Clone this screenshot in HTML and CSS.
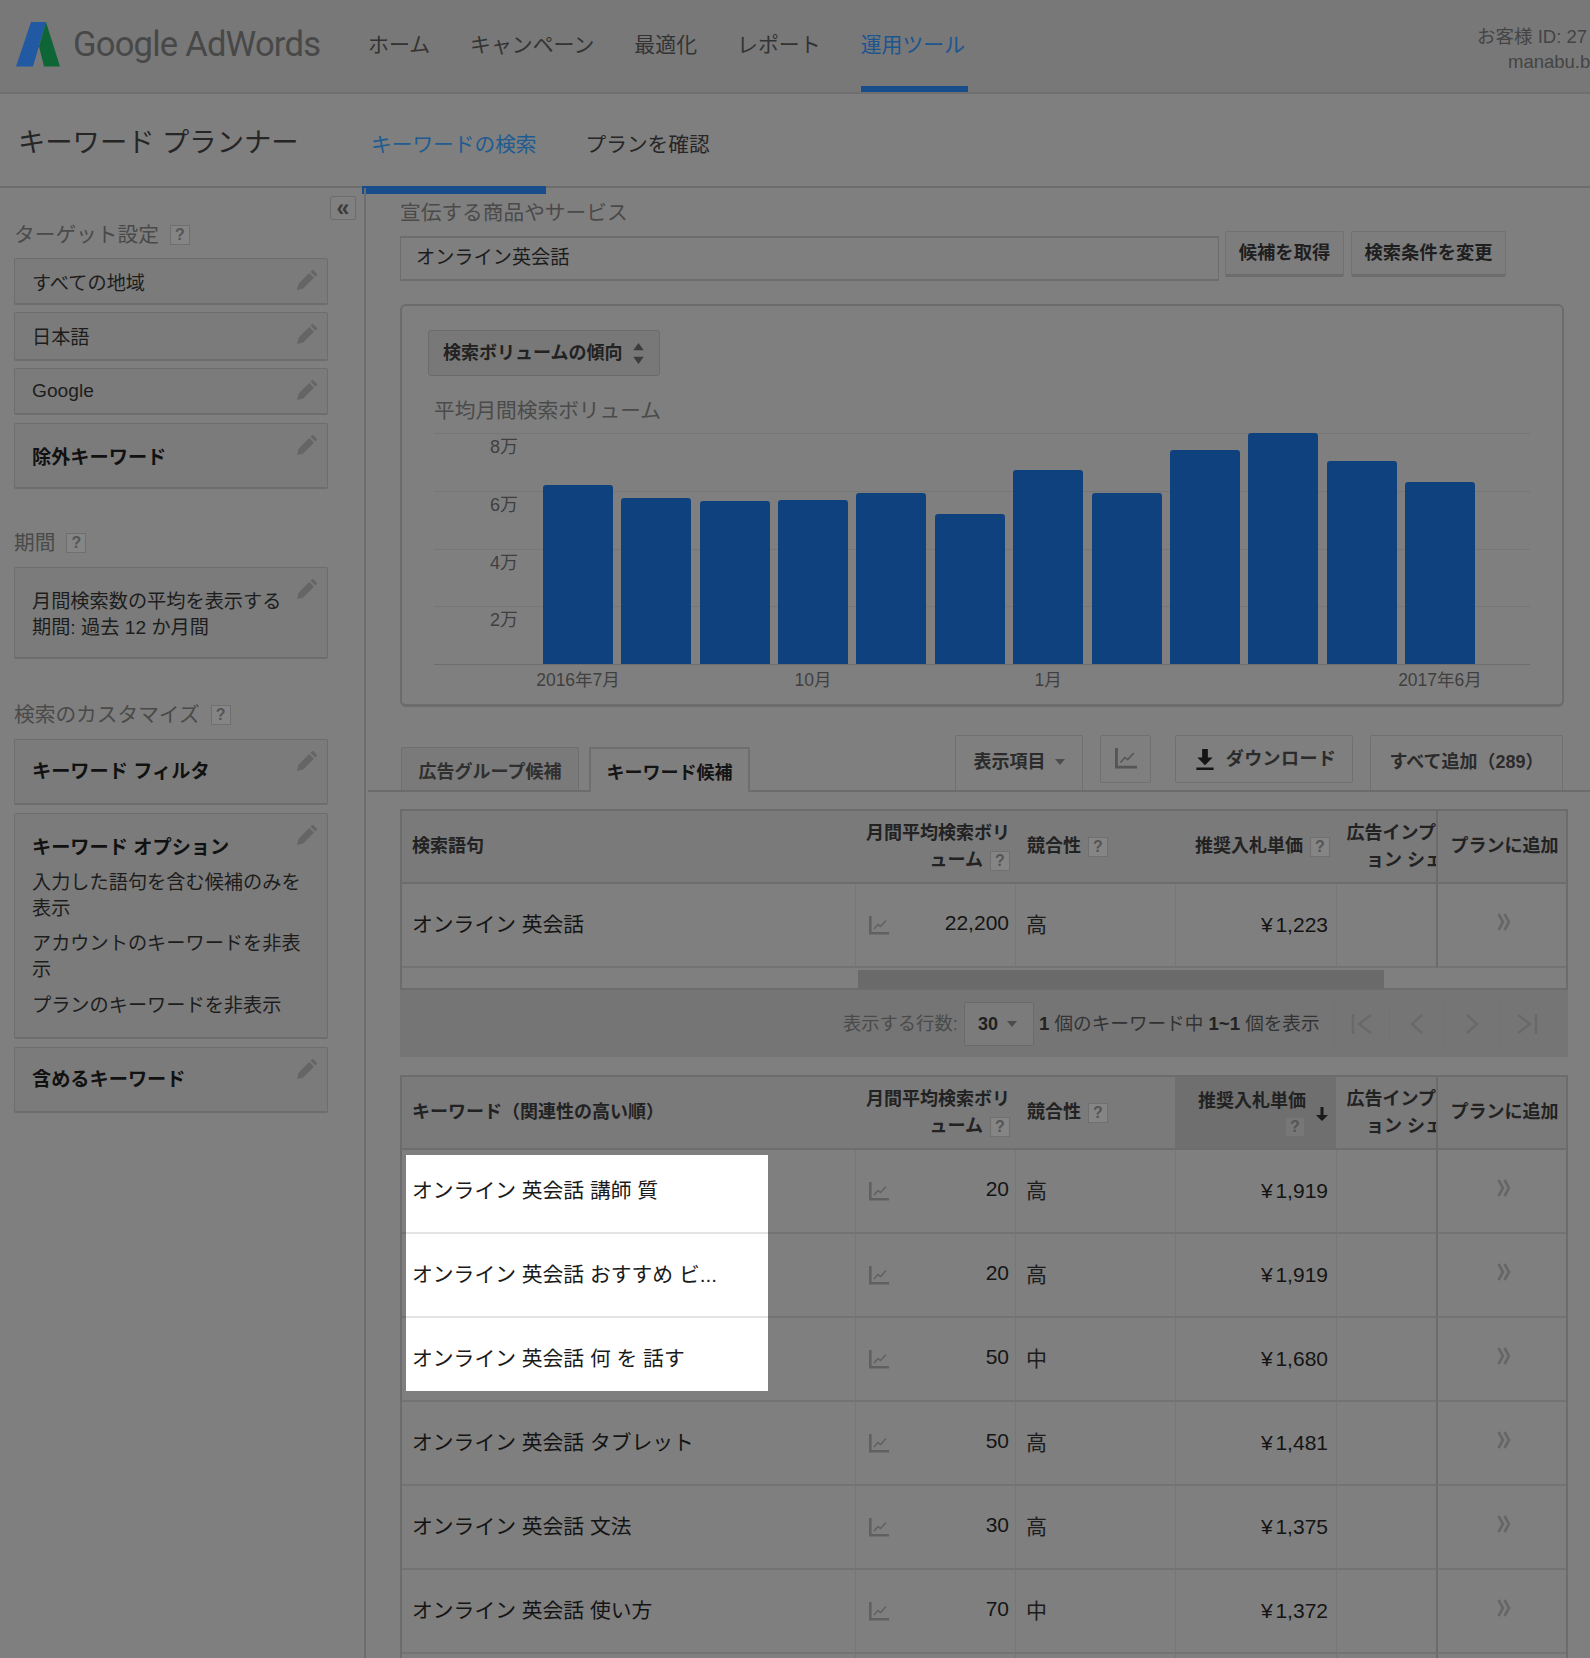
FILE: index.html
```html
<!DOCTYPE html>
<html lang="ja">
<head>
<meta charset="utf-8">
<title>Google AdWords キーワード プランナー</title>
<link rel="stylesheet" href="styles.css">
</head>
<body>
<svg class="defs" width="0" height="0" aria-hidden="true">
  <symbol id="pencil" viewBox="0 0 18 18"><path d="M0 18l1.400-5.600L11 2.800l4.200 4.200-9.600 9.600z"/><path d="M12.200 1.600L13.600.2c.3-.3.8-.3 1.100 0l3.100 3.100c.3.3.3.8 0 1.100l-1.400 1.400z"/></symbol>
  <symbol id="trend" viewBox="0 0 20 20"><path d="M1.300 1v17.300H20" fill="none" stroke="currentColor" stroke-width="2.600"/><path d="M5 14l4-4.500 2.500 2L17 5.500" fill="none" stroke="currentColor" stroke-width="1.400"/></symbol>
  <symbol id="more" viewBox="0 0 14 18"><path d="M1.500 1l4.500 8-4.500 8M7.500 1l4.500 8-4.500 8" fill="none" stroke="currentColor" stroke-width="2.600"/></symbol>
</svg>

<header class="topbar">
  <svg class="logo" viewBox="0 0 44 45" aria-hidden="true"><path d="M0 44.500L15 0h15L17 44.500z" fill="#2159a3"/><path d="M30 0l14 44.500H28l-5-20z" fill="#0e6535"/></svg>
  <div class="brand">Google AdWords</div>
  <nav class="mainnav">
    <a class="mainnav-item">ホーム</a>
    <a class="mainnav-item">キャンペーン</a>
    <a class="mainnav-item">最適化</a>
    <a class="mainnav-item">レポート</a>
    <a class="mainnav-item is-active">運用ツール</a>
  </nav>
  <div class="account">
    <div>お客様 ID: 27</div>
    <div class="account-mail">manabu.b</div>
  </div>
</header>

<div class="subbar">
  <h1 class="page-title">キーワード プランナー</h1>
  <a class="subtab is-active">キーワードの検索</a>
  <a class="subtab">プランを確認</a>
</div>

<div class="layout">
  <aside class="sidebar">
    <button class="collapse">«</button>

    <h2 class="side-title">ターゲット設定<span class="help help-side">?</span></h2>
    <div class="card-stack">
      <div class="card card-s card-low"><span>すべての地域</span><svg class="pencil"><use href="#pencil"/></svg></div>
      <div class="card card-m"><span>日本語</span><svg class="pencil"><use href="#pencil"/></svg></div>
      <div class="card card-s"><span>Google</span><svg class="pencil"><use href="#pencil"/></svg></div>
      <div class="card card-l card-first-gap card-low"><b>除外キーワード</b><svg class="pencil"><use href="#pencil"/></svg></div>
    </div>

    <h2 class="side-title side-title-next">期間<span class="help help-side">?</span></h2>
    <div class="card card-period">
      <p>月間検索数の平均を表示する<br>期間: 過去 12 か月間</p>
      <svg class="pencil"><use href="#pencil"/></svg>
    </div>

    <h2 class="side-title side-title-last">検索のカスタマイズ<span class="help help-side">?</span></h2>
    <div class="card-stack card-stack-wide">
      <div class="card card-l"><b>キーワード フィルタ</b><svg class="pencil"><use href="#pencil"/></svg></div>
      <div class="card card-options">
        <b>キーワード オプション</b>
        <p>入力した語句を含む候補のみを表示</p>
        <p>アカウントのキーワードを非表示</p>
        <p class="option-last">プランのキーワードを非表示</p>
        <svg class="pencil"><use href="#pencil"/></svg>
      </div>
      <div class="card card-l"><b>含めるキーワード</b><svg class="pencil"><use href="#pencil"/></svg></div>
    </div>
  </aside>

  <main class="content">
    <div class="field-label">宣伝する商品やサービス</div>
    <div class="search-row">
      <div class="search-input">オンライン英会話</div>
      <button class="btn btn-get">候補を取得</button>
      <button class="btn btn-change">検索条件を変更</button>
    </div>

    <section class="chart-panel">
      <div class="chart-select">検索ボリュームの傾向
        <svg class="updown" viewBox="0 0 10 20" aria-hidden="true"><path d="M5 0l5 7H0zM5 20l-5-7h10z"/></svg>
      </div>
      <div class="chart-title">平均月間検索ボリューム</div>
      <div class="plot">
        <div class="plot-row"><span>8万</span></div>
        <div class="plot-row"><span>6万</span></div>
        <div class="plot-row"><span>4万</span></div>
        <div class="plot-row"><span>2万</span></div>
        <div class="bars">
          <i class="bar" style="height:179px"></i><i class="bar" style="height:166px"></i><i class="bar" style="height:163px"></i><i class="bar" style="height:164px"></i><i class="bar" style="height:171px"></i><i class="bar" style="height:150px"></i><i class="bar" style="height:194px"></i><i class="bar" style="height:171px"></i><i class="bar" style="height:214px"></i><i class="bar" style="height:231px"></i><i class="bar" style="height:203px"></i><i class="bar" style="height:182px"></i>
        </div>
      </div>
      <div class="x-axis">
        <span>2016年7月</span><span></span><span></span><span>10月</span><span></span><span></span><span>1月</span><span></span><span></span><span></span><span></span><span>2017年6月</span>
      </div>
    </section>

    <div class="result-tabs">
      <a class="rtab">広告グループ候補</a>
      <a class="rtab is-active">キーワード候補</a>
      <div class="tools">
        <button class="tool tool-columns">表示項目<i class="caret"></i></button>
        <button class="tool tool-short tool-chart"><svg class="trend-lg"><use href="#trend"/></svg></button>
        <button class="tool tool-short tool-download">
          <svg class="dl" viewBox="0 0 18 22" aria-hidden="true"><path d="M6 0h6v9h5l-8 8-8-8h5zM0 19.500h18V22H0z"/></svg>ダウンロード
        </button>
        <button class="tool tool-add">すべて追加（289）</button>
      </div>
    </div>

    <div class="grid-wrap">
      <table class="grid">
        <colgroup><col class="c1"><col class="c2"><col class="c3"><col class="c4"><col class="c5"><col class="c6"></colgroup>
        <thead><tr>
          <th class="t-left">検索語句</th>
          <th class="t-right">月間平均検索ボリ<br>ューム<span class="help">?</span></th>
          <th class="t-left th-comp">競合性<span class="help">?</span></th>
          <th class="t-right th-bid">推奨入札単価<span class="help">?</span></th>
          <th class="t-right th-share">広告インプ<br><span class="share-2">ョン シェ</span></th>
          <th class="t-plan">プランに追加</th>
        </tr></thead>
        <tbody>
          <tr>
            <td class="kw">オンライン 英会話</td>
            <td><div class="vol"><svg class="trend"><use href="#trend"/></svg><span>22,200</span></div></td>
            <td class="comp">高</td><td class="bid">¥ 1,223</td><td></td><td class="plan"><svg class="more"><use href="#more"/></svg></td>
          </tr>
        </tbody>
      </table>
      <div class="hscroll"><div class="hthumb"></div></div>
    </div>

    <div class="pagination">
      <span class="pg-label">表示する行数:</span>
      <div class="pg-select">30<i class="caret"></i></div>
      <span class="pg-info"><b>1</b> 個のキーワード中 <b>1~1</b> 個を表示</span>
      <div class="pager">
        <span><svg viewBox="0 0 24 24"><path d="M3 2v20M21 3L9 12l12 9"/></svg></span>
        <span><svg viewBox="0 0 24 24"><path d="M17 3L7 12l10 9"/></svg></span>
        <span><svg viewBox="0 0 24 24"><path d="M7 3l10 9-10 9"/></svg></span>
        <span><svg viewBox="0 0 24 24"><path d="M3 3l12 9-12 9M21 2v20"/></svg></span>
      </div>
    </div>

    <div class="grid-wrap grid-wrap-2">
      <table class="grid">
        <colgroup><col class="c1"><col class="c2"><col class="c3"><col class="c4"><col class="c5"><col class="c6"></colgroup>
        <thead><tr>
          <th class="t-left">キーワード（関連性の高い順）</th>
          <th class="t-right">月間平均検索ボリ<br>ューム<span class="help">?</span></th>
          <th class="t-left th-comp">競合性<span class="help">?</span></th>
          <th class="th-sorted"><div class="sorted"><div class="sorted-text">推奨入札単価<br><span class="help help-plain">?</span></div><svg class="arrow" viewBox="0 0 12 14" aria-hidden="true"><path d="M4.500 0h3v8H12l-6 6-6-6h4.500z"/></svg></div></th>
          <th class="t-right th-share">広告インプ<br><span class="share-2">ョン シェ</span></th>
          <th class="t-plan">プランに追加</th>
        </tr></thead>
        <tbody>
          <tr>
            <td class="kw-hl"><div class="hl hl-first">オンライン 英会話 講師 質</div></td>
            <td><div class="vol"><svg class="trend"><use href="#trend"/></svg><span>20</span></div></td>
            <td class="comp">高</td><td class="bid">¥ 1,919</td><td></td><td class="plan"><svg class="more"><use href="#more"/></svg></td>
          </tr>
          <tr>
            <td class="kw-hl kw-hl-next"><div class="hl hl-mid">オンライン 英会話 おすすめ ビ...</div></td>
            <td><div class="vol"><svg class="trend"><use href="#trend"/></svg><span>20</span></div></td>
            <td class="comp">高</td><td class="bid">¥ 1,919</td><td></td><td class="plan"><svg class="more"><use href="#more"/></svg></td>
          </tr>
          <tr>
            <td class="kw-hl kw-hl-next"><div class="hl hl-last">オンライン 英会話 何 を 話す</div></td>
            <td><div class="vol"><svg class="trend"><use href="#trend"/></svg><span>50</span></div></td>
            <td class="comp">中</td><td class="bid">¥ 1,680</td><td></td><td class="plan"><svg class="more"><use href="#more"/></svg></td>
          </tr>
          <tr>
            <td class="kw">オンライン 英会話 タブレット</td>
            <td><div class="vol"><svg class="trend"><use href="#trend"/></svg><span>50</span></div></td>
            <td class="comp">高</td><td class="bid">¥ 1,481</td><td></td><td class="plan"><svg class="more"><use href="#more"/></svg></td>
          </tr>
          <tr>
            <td class="kw">オンライン 英会話 文法</td>
            <td><div class="vol"><svg class="trend"><use href="#trend"/></svg><span>30</span></div></td>
            <td class="comp">高</td><td class="bid">¥ 1,375</td><td></td><td class="plan"><svg class="more"><use href="#more"/></svg></td>
          </tr>
          <tr>
            <td class="kw">オンライン 英会話 使い方</td>
            <td><div class="vol"><svg class="trend"><use href="#trend"/></svg><span>70</span></div></td>
            <td class="comp">中</td><td class="bid">¥ 1,372</td><td></td><td class="plan"><svg class="more"><use href="#more"/></svg></td>
          </tr>
          <tr><td></td><td></td><td></td><td></td><td></td><td></td></tr>
        </tbody>
      </table>
    </div>
  </main>
</div>
</body>
</html>
```

FILE: styles.css
```css
* { box-sizing: border-box; }
html, body { margin: 0; height: 1658px; overflow: hidden; }
body {
  background: #7f7f7f;
  color: #171717;
  font-family: "Liberation Sans", "Noto Sans CJK JP", sans-serif;
  font-size: 19.200px;
  line-height: 26px;
}
.defs { position: absolute; }
button { font: inherit; color: inherit; padding: 0; cursor: default; }
h1, h2, p { margin: 0; font-weight: 400; }

/* top bar */
.topbar {
  display: flex;
  align-items: center;
  height: 94px;
  padding-left: 16px;
  background: #787878;
  border-bottom: 2px solid #6f6f6f;
  overflow: hidden;
}
.logo { width: 44px; height: 45px; flex: none; margin-bottom: 4px; }
.brand {
  flex: none;
  width: 308px;
  padding: 0 0 4px 13px;
  font-family: Roboto, "Liberation Sans", sans-serif;
  font-weight: 400;
  font-size: 34.600px;
  letter-spacing: -0.8px;
  color: #484848;
}
.mainnav { display: flex; align-self: stretch; gap: 40px; }
.mainnav-item {
  display: flex;
  align-items: center;
  padding-top: 4px;
  border-bottom: 6px solid transparent;
  font-size: 20.900px;
  color: #333;
  white-space: nowrap;
}
.mainnav-item.is-active { padding-right: 3px; color: #1d5590; border-bottom-color: #174d8a; }
.account {
  flex: none;
  width: 113px;
  margin-left: auto;
  padding-top: 6px;
  font-size: 18.500px;
  line-height: 25px;
  color: #444;
  white-space: nowrap;
}
.account-mail { margin-left: 31px; }

/* sub bar */
.subbar {
  display: flex;
  align-items: center;
  height: 94px;
  padding-left: 18px;
  border-bottom: 2px solid #6d6d6d;
}
.page-title { width: 344px; flex: none; padding-top: 6px; font-size: 27.300px; color: #262626; }
.subtab {
  position: relative;
  padding: 9px 9px 0;
  font-size: 20.700px;
  color: #262626;
  white-space: nowrap;
}
.subtab + .subtab { margin-left: 31px; }
.subtab.is-active { color: #205b91; }
.subtab.is-active::after {
  content: "";
  position: absolute;
  left: 0;
  right: 0;
  top: 63px;
  height: 8px;
  background: #174d8a;
}

.layout { display: flex; align-items: stretch; }

/* sidebar */
.sidebar {
  position: relative;
  flex: none;
  width: 366px;
  height: 1470px;
  padding: 35px 0 0 14px;
  border-right: 2px solid #6d6d6d;
}
.collapse {
  position: absolute;
  left: 330px;
  top: 8px;
  width: 26px;
  height: 24px;
  border: 1px solid #6c6c6c;
  border-radius: 2px;
  background: #808080;
  font-size: 23px;
  line-height: 18px;
  font-weight: 700;
  color: #3c3c3c;
}
.side-title {
  display: flex;
  align-items: center;
  height: 24px;
  margin-bottom: 12px;
  font-size: 20.700px;
  color: #4a4a4a;
  white-space: nowrap;
}
.side-title:first-of-type { margin-bottom: 11px; }
.side-title-next { margin-top: 42px; }
.side-title-last { margin-top: 44px; }
.help {
  display: inline-block;
  width: 20px;
  height: 20px;
  margin-left: 11px;
  border: 1px solid #6f6f6f;
  background: #858585;
  color: #555;
  font-family: "Liberation Sans", sans-serif;
  font-size: 16px;
  font-weight: 700;
  line-height: 18px;
  text-align: center;
  vertical-align: 0;
}
.card-stack { display: flex; flex-direction: column; gap: 7px; width: 314px; }
.card-stack-wide { gap: 8px; }
.card {
  position: relative;
  display: flex;
  align-items: center;
  width: 314px;
  padding: 0 24px 0 17px;
  background: #7b7b7b;
  border: 1px solid #6d6d6d;
  border-bottom-width: 2px;
  border-radius: 2px;
  color: #1d1d1d;
}
.card b { font-weight: 700; color: #111; }
.card-s { height: 47px; }
.card-m { height: 49px; padding-top: 3px; }
.card-l { height: 66px; }
.card-low { padding-top: 5px; }
.card-first-gap { margin-top: 1px; }
.card-period { height: 92px; padding-top: 5px; }
.card-options {
  display: block;
  height: 226px;
  padding-top: 21px;
}
.card-options b { display: block; }
.card-options p { margin-top: 9px; }
.card-options .option-last { margin-top: 10px; }
.pencil {
  position: absolute;
  right: 10px;
  top: 11px;
  width: 20px;
  height: 20px;
  fill: #656565;
}

/* main */
.content { flex: none; width: 1202px; padding: 13px 0 0 34px; }
.field-label { height: 24px; margin-bottom: 6px; font-size: 20.700px; line-height: 24px; color: #4a4a4a; }
.search-row { display: flex; align-items: flex-start; }
.search-input {
  width: 819px;
  height: 45px;
  margin-top: 5px;
  padding-left: 15px;
  border: 1px solid #6d6d6d;
  border-top-width: 2px;
  border-bottom-width: 2px;
  font-size: 19.200px;
  line-height: 40px;
  color: #1c1c1c;
}
.btn {
  height: 46px;
  margin-left: 6px;
  background: #7d7d7d;
  border: 1px solid #727272;
  border-bottom: 3px solid #6c6c6c;
  border-radius: 2px;
  font-size: 18.300px;
  font-weight: 700;
  color: #1f1f1f;
}
.btn-get { width: 119px; }
.btn-change { width: 155px; margin-left: 7px; }

.chart-panel {
  width: 1164px;
  height: 403px;
  margin-top: 23px;
  padding: 24px 0 0 26px;
  border: 2px solid #6c6c6c;
  border-bottom-width: 3px;
  border-radius: 6px;
}
.chart-select {
  display: flex;
  align-items: center;
  justify-content: space-between;
  width: 232px;
  height: 46px;
  padding: 0 15px 0 14px;
  background: #787878;
  border: 1px solid #6b6b6b;
  border-radius: 3px;
  font-size: 18px;
  font-weight: 700;
  color: #222;
  white-space: nowrap;
}
.updown { width: 11px; height: 21px; fill: #3c3c3c; flex: none; }
.chart-title {
  height: 24px;
  margin: 23px 0 10px 6px;
  font-size: 20.700px;
  line-height: 24px;
  color: #4a4a4a;
}
.plot {
  position: relative;
  width: 1096px;
  height: 232px;
  margin-left: 6px;
  border-bottom: 1px solid #6e6e6e;
  display: flex;
  flex-direction: column;
}
.plot-row {
  flex: 1;
  padding-top: 1px;
  border-top: 1px solid #767676;
  font-size: 18px;
  line-height: 24px;
  color: #3f3f3f;
}
.plot-row span { display: block; width: 84px; text-align: right; }
.bars {
  position: absolute;
  left: 109px;
  bottom: 0;
  width: 932px;
  height: 232px;
  display: flex;
  align-items: flex-end;
  justify-content: space-between;
}
.bar { display: block; width: 70px; background: #0f417f; border-radius: 3px 3px 0 0; }
.x-axis {
  display: flex;
  justify-content: space-between;
  width: 932px;
  margin: 3px 0 0 115px;
  font-size: 17.500px;
  line-height: 24px;
  color: #3f3f3f;
}
.x-axis span { display: flex; justify-content: center; width: 70px; white-space: nowrap; }

/* result tabs */
.result-tabs {
  display: flex;
  align-items: flex-end;
  width: 1222px;
  height: 57px;
  margin: 28px 0 0 -32px;
  padding-left: 33px;
  border-bottom: 2px solid #6c6c6c;
}
.rtab {
  display: flex;
  align-items: center;
  justify-content: center;
  width: 178px;
  height: 43px;
  padding-top: 5px;
  background: #7a7a7a;
  border: 1px solid #6e6e6e;
  border-bottom: 0;
  border-radius: 2px 2px 0 0;
  font-size: 18px;
  font-weight: 700;
  color: #303030;
  white-space: nowrap;
}
.rtab.is-active {
  width: 161px;
  height: 45px;
  margin: 0 0 -2px 10px;
  background: #7f7f7f;
  border-width: 2px 2px 0;
  color: #141414;
}
.tools { display: flex; align-items: flex-end; height: 55px; margin-left: auto; padding-right: 27px; }
.tool {
  display: flex;
  align-items: center;
  justify-content: center;
  height: 55px;
  padding-bottom: 2px;
  background: #7f7f7f;
  border: 1px solid #707070;
  border-bottom: 0;
  border-radius: 2px 2px 0 0;
  font-size: 18px;
  font-weight: 700;
  color: #2b2b2b;
  white-space: nowrap;
}
.tool-short {
  align-self: flex-start;
  height: 48px;
  padding-bottom: 0;
  border-bottom: 1px solid #707070;
  border-radius: 2px;
}
.tool-columns { width: 128px; }
.tool-chart { width: 51px; margin-left: 17px; padding-bottom: 3px; }
.tool-download { width: 178px; margin-left: 24px; padding-left: 4px; letter-spacing: .4px; }
.tool-add { width: 193px; margin-left: 17px; }
.caret {
  display: inline-block;
  margin-left: 9px;
  border-style: solid;
  border-width: 6px 5px 0;
  border-color: #4c4c4c transparent transparent;
}
.trend-lg { width: 22px; height: 22px; color: #555; }
.dl { width: 18px; height: 21px; margin-right: 12px; fill: #141414; }

/* tables */
.grid-wrap {
  width: 1168px;
  margin-top: 17px;
  border: 2px solid #6c6c6c;
}
.grid-wrap-2 { margin-top: 18px; border-bottom: 0; }
.grid {
  table-layout: fixed;
  width: 1164px;
  border-collapse: separate;
  border-spacing: 0;
}
.c1 { width: 453px; } .c2 { width: 160px; } .c3 { width: 160px; }
.c4 { width: 161px; } .c5 { width: 100px; } .c6 { width: 130px; }
.grid th {
  height: 73px;
  padding: 0 5px 0 10px;
  background: #7a7a7a;
  border-bottom: 2px solid #6d6d6d;
  font-size: 18px;
  line-height: 27px;
  font-weight: 700;
  color: #222;
  overflow: hidden;
  white-space: nowrap;
}
.grid th .help { margin-left: 7px; }
.t-left { text-align: left; }
.t-right { text-align: right; }
.grid .th-comp { padding-left: 12px; }
.grid .th-bid { padding-right: 6px; }
.grid .th-share { padding: 0; }
.share-2 { display: inline-block; margin-right: -7px; }
.grid .t-plan {
  padding: 0 0 0 5px;
  text-align: center;
  border-left: 2px solid #6b6b6b;
}
.grid .th-sorted { padding: 0 8px 0 0; background: #6f6f6f; }
.sorted { display: flex; align-items: center; justify-content: flex-end; gap: 10px; }
.sorted-text { padding-top: 2px; line-height: 25px; text-align: right; }
.grid th .help-plain { margin: 0 1px 0 0; background: #777; }
.arrow { width: 12px; height: 14px; fill: #1a1a1a; margin-top: 2px; }

.grid td {
  height: 84px;
  padding: 0;
  border-bottom: 2px solid #737373;
  border-left: 1px solid #777;
  font-size: 21px;
  line-height: 28px;
  vertical-align: middle;
  white-space: nowrap;
}
.grid td:first-child { border-left: 0; }
.grid td:last-child { border-left: 2px solid #6b6b6b; }
.grid .kw { padding-left: 10px; font-size: 20.800px; color: #141414; }
.vol {
  display: flex;
  align-items: center;
  justify-content: space-between;
  padding: 0 6px 0 13px;
  color: #141414;
}
.vol span { padding-bottom: 4px; }
.trend { width: 20px; height: 20px; color: #606060; }
.grid .comp { padding-left: 10px; color: #1c1c1c; }
.grid .bid { padding-right: 8px; text-align: right; word-spacing: -3px; color: #141414; }
.grid .plan { padding: 0 0 8px 4px; text-align: center; color: #666; }
.more { display: inline-block; width: 14px; height: 18px; vertical-align: middle; }

/* highlight */
.grid .kw-hl { padding: 5px 0 0 4px; vertical-align: top; }
.grid .kw-hl-next { padding-top: 0; }
.hl {
  width: 362px;
  padding-left: 6px;
  margin-bottom: -2px;
  background: #fff;
  font-size: 20.800px;
  color: #1a1a1a;
}
.hl-first { height: 79px; padding-top: 22px; border-bottom: 2px solid #e4e4e4; }
.hl-mid { height: 84px; padding-top: 27px; border-bottom: 2px solid #e4e4e4; }
.hl-last { height: 73px; padding-top: 27px; margin-bottom: 9px; }

.hscroll { height: 20px; padding-top: 2px; }
.hthumb { width: 526px; height: 18px; margin-left: 456px; background: #6a6a6a; }

/* pagination */
.pagination {
  display: flex;
  align-items: center;
  width: 1168px;
  height: 67px;
  padding-left: 443px;
  background: #757575;
  font-size: 18.300px;
  white-space: nowrap;
}
.pg-label { flex: none; width: 121px; color: #4a4a4a; }
.pg-select {
  display: flex;
  align-items: center;
  flex: none;
  width: 70px;
  height: 44px;
  padding-left: 13px;
  border: 1px solid #6b6b6b;
  border-radius: 2px;
  background: #7b7b7b;
  font-size: 18px;
  font-weight: 700;
  color: #202020;
}
.pg-info { margin-left: 5px; font-size: 18.600px; color: #333; }
.pg-info b { color: #222; }
.pager { display: flex; margin-left: auto; padding-right: 14px; }
.pager span {
  display: flex;
  align-items: center;
  justify-content: center;
  width: 55px;
  height: 44px;
  border-left: 1px solid #727272;
}
.pager svg {
  width: 24px;
  height: 24px;
  fill: none;
  stroke: #696969;
  stroke-width: 2.400;
}
```
